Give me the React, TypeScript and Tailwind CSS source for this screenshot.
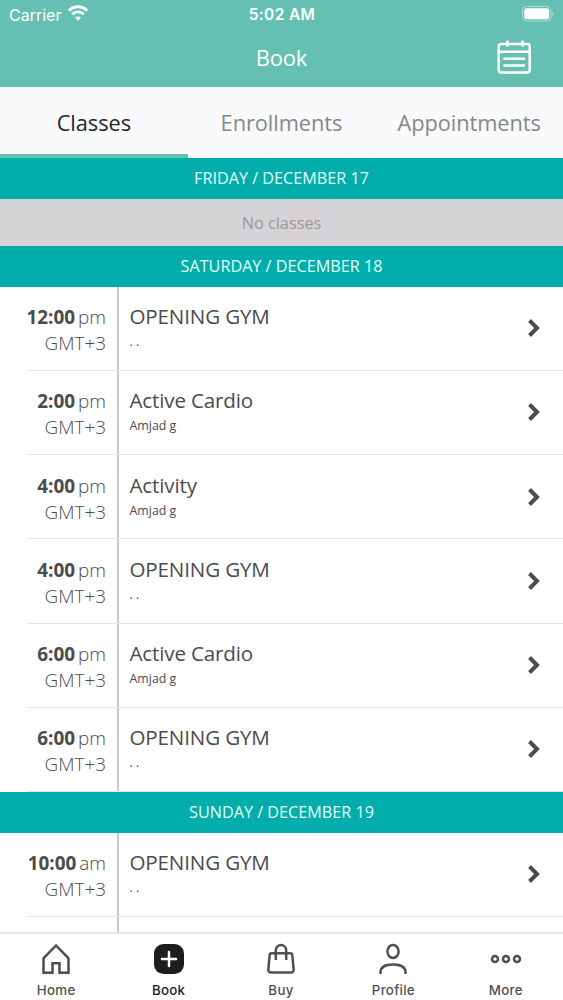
import type { ReactNode } from "react";

type ClassItem = { time: string; period: string; title: string; teacher: string };

const saturday: ClassItem[] = [
  { time: "12:00", period: "pm", title: "OPENING GYM", teacher: ". ." },
  { time: "2:00", period: "pm", title: "Active Cardio", teacher: "Amjad g" },
  { time: "4:00", period: "pm", title: "Activity", teacher: "Amjad g" },
  { time: "4:00", period: "pm", title: "OPENING GYM", teacher: ". ." },
  { time: "6:00", period: "pm", title: "Active Cardio", teacher: "Amjad g" },
  { time: "6:00", period: "pm", title: "OPENING GYM", teacher: ". ." },
];

const sunday: ClassItem[] = [
  { time: "10:00", period: "am", title: "OPENING GYM", teacher: ". ." },
];

function StatusBar() {
  return (
    <div className="grid h-7 grid-cols-3 items-center pl-[9px] pr-[8px] font-['Inter','Liberation_Sans',sans-serif] leading-none">
      <div className="flex items-center gap-[7px]">
        <span className="pt-px text-[16px]">Carrier</span>
        <svg width="20" height="16" viewBox="0 0 20 16" fill="none" stroke="currentColor" className="-mt-0.5">
          <path d="M.9 5.6C6 .5 14 .5 19.1 5.6" strokeWidth="3" />
          <path d="M4.2 9.2c3.3-3.1 8.3-3.1 11.6 0" strokeWidth="2.8" />
          <path d="M10 15.7 6.9 12.5c1.8-1.5 4.4-1.5 6.2 0z" fill="currentColor" stroke="none" />
        </svg>
      </div>
      <span className="pt-px text-center text-[15.5px] font-semibold tracking-[0.35px]">5:02 AM</span>
      <svg width="33" height="16" viewBox="0 0 33 16" className="justify-self-end">
        <rect x=".5" y=".5" width="28.5" height="14.5" rx="4" fill="none" stroke="currentColor" opacity=".45" />
        <rect x="2.2" y="2.2" width="25" height="11" rx="2.5" fill="currentColor" />
        <path d="M30.5 5.5c1.8.8 1.8 3.8 0 4.6z" fill="currentColor" opacity=".5" />
      </svg>
    </div>
  );
}

function Header() {
  return (
    <header className="h-[87px] shrink-0 bg-[#66c0b1] text-white">
      <StatusBar />
      <div className="grid h-[59px] grid-cols-[1fr_auto_1fr] items-center pr-[32px]">
        <span />
        <h1 className="pl-8 text-center text-[22px] tracking-[-0.2px]">Book</h1>
        <svg width="34" height="34" viewBox="0 0 34 34" fill="none" stroke="currentColor" strokeWidth="2.5" strokeLinecap="round" className="-mt-0.5 justify-self-end">
          <rect x="1.7" y="4" width="31" height="28.5" rx="2.5" />
          <path d="M1.7 11.7h31M10.5 1.5v4M25.5 1.5v4M7.5 18.7H27M7.5 25.4H27" />
        </svg>
      </div>
    </header>
  );
}

function Tab({ label, active }: { label: string; active?: boolean }) {
  return (
    <button
      className={
        active
          ? "border-b-4 border-[#66c0b1] pt-1.5 text-[#24272b]"
          : "border-b-4 border-transparent pt-1.5 text-[#85888b]"
      }
    >
      {label}
    </button>
  );
}

function DayHeading({ children }: { children: ReactNode }) {
  return (
    <h2 className="h-[41px] bg-[#02adab] text-center text-[16.2px] leading-[41px] text-[#e3ffff]">
      {children}
    </h2>
  );
}

function ClassRow({ item }: { item: ClassItem }) {
  return (
    <li className="relative flex h-[84.17px] pt-[17.3px] text-[#4b4b4d] after:absolute after:bottom-0 after:left-[27px] after:right-0 after:h-px after:bg-[#e4e4e4]">
      <div className="w-[106px] shrink-0 text-right text-[18.9px] leading-[26px]">
        <div className="whitespace-nowrap">
          <b className="font-bold">{item.time}</b>
          <span className="ml-[3px] font-light">{item.period}</span>
        </div>
        <div className="font-light">GMT+3</div>
      </div>
      <div className="-mt-[17.3px] ml-[11px] w-[1.5px] shrink-0 bg-[#c8c8ca]" />
      <div className="ml-[11px] grow">
        <div className="text-[20.6px] leading-[25px] tracking-[-0.16px]">{item.title}</div>
        <div className="mt-[3px] text-[12.4px] leading-5">{item.teacher}</div>
      </div>
      <svg width="14" height="20" viewBox="0 0 14 20" fill="none" stroke="currentColor" strokeWidth="4" className="mr-[22px] mt-[14px]">
        <path d="m2.5 2.5 7.5 7.5-7.5 7.5" />
      </svg>
    </li>
  );
}

function NavItem({ label, active, children }: { label: string; active?: boolean; children: ReactNode }) {
  return (
    <a
      className={
        active
          ? "flex flex-col items-center text-[#1d1d1f]"
          : "flex flex-col items-center text-[#4f4f51]"
      }
    >
      <svg width="32" height="32" viewBox="0 0 32 32" fill="none" stroke="currentColor" strokeWidth="2.5">
        {children}
      </svg>
      <span className="mt-[7px] text-[13.3px] font-medium leading-4 tracking-[0.3px]">{label}</span>
    </a>
  );
}

function BottomNav() {
  return (
    <nav className="grid h-[68px] shrink-0 grid-cols-5 border-t-2 border-[#e5e5e6] bg-white pr-px pt-[9px] font-['Inter','Liberation_Sans',sans-serif]">
      <NavItem label="Home">
        <path d="M16 2.500 3.500 15.300v14.500h9v-9.500h7v9.500h9V15.300z" />
      </NavItem>
      <NavItem label="Book" active>
        <rect x="1" y="1" width="30" height="30" rx="9.5" fill="currentColor" stroke="none" />
        <path d="M16 9v14M9 16h14" stroke="white" strokeLinecap="round" />
      </NavItem>
      <NavItem label="Buy">
        <path d="M6.7 10.2h18.600a2 2 0 0 1 2 1.800l1.400 14.700a2.600 2.600 0 0 1-2.600 2.800H5.900a2.600 2.600 0 0 1-2.600-2.800L4.700 12a2 2 0 0 1 2-1.800z" />
        <path d="M10.800 17V7.200a5.200 5.200 0 0 1 10.400 0V17" />
      </NavItem>
      <NavItem label="Profile">
        <ellipse cx="16" cy="8.5" rx="5.6" ry="6.5" />
        <path d="M3.5 31v-1.500c0-5 4.500-8 12.500-8s12.500 3 12.500 8V31" />
      </NavItem>
      <NavItem label="More">
        <circle cx="5" cy="16" r="3" />
        <circle cx="16" cy="16" r="3" />
        <circle cx="27" cy="16" r="3" />
      </NavItem>
    </nav>
  );
}

export default function App() {
  return (
    <div className="flex h-[1000px] w-[563px] flex-col overflow-hidden bg-white font-['Open_Sans','Noto_Sans',sans-serif]">
      <Header />
      <div className="grid h-[71px] shrink-0 grid-cols-3 bg-[#f8fafc] text-[21.8px] tracking-[-0.06px]">
        <Tab label="Classes" active />
        <Tab label="Enrollments" />
        <Tab label="Appointments" />
      </div>
      <main className="min-h-0 grow overflow-hidden">
        <DayHeading>FRIDAY / DECEMBER 17</DayHeading>
        <p className="h-[47px] bg-[#d6d3d6] text-center text-[16.3px] leading-[48px] text-[#99989b]">
          No classes
        </p>
        <DayHeading>SATURDAY / DECEMBER 18</DayHeading>
        <ul>
          {saturday.map((item, i) => (
            <ClassRow key={i} item={item} />
          ))}
        </ul>
        <DayHeading>SUNDAY / DECEMBER 19</DayHeading>
        <ul>
          {sunday.map((item, i) => (
            <ClassRow key={i} item={item} />
          ))}
          {/* next row, mostly hidden behind the nav */}
          <li className="flex h-[84px]">
            <div className="ml-[117px] w-[1.5px] bg-[#c8c8ca]" />
          </li>
        </ul>
      </main>
      <BottomNav />
    </div>
  );
}
